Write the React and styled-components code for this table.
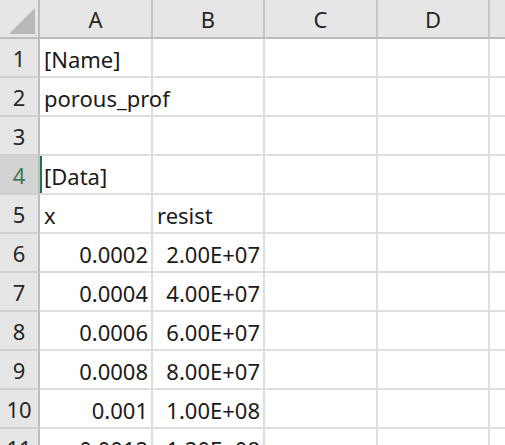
import React from 'react';
import styled, { createGlobalStyle } from "styled-components";

const GlobalStyle = createGlobalStyle`
  html, body {
    margin: 0;
    padding: 0;
    background: #fff;
    overflow: hidden;
  }
`;

const columns = ["A", "B", "C", "D", ""];

// [value, isNumber] pairs for columns A and B
const rows = [
  [["[Name]"], [""]],
  [["porous_prof"], [""]],
  [[""], [""]],
  [["[Data]"], [""]],
  [["x"], ["resist"]],
  [["0.0002", true], ["2.00E+07", true]],
  [["0.0004", true], ["4.00E+07", true]],
  [["0.0006", true], ["6.00E+07", true]],
  [["0.0008", true], ["8.00E+07", true]],
  [["0.001", true], ["1.00E+08", true]],
  [["0.0012", true], ["1.20E+08", true]],
];

const ACTIVE_ROW = 4;

function App() {
  return (
    <>
      <GlobalStyle />
      <Sheet>
        <Corner>
          <svg width="26" height="26" viewBox="0 0 26 26">
            <polygon points="26,0 26,26 0,26" fill="#b9b9b9" />
          </svg>
        </Corner>
        {columns.map((c, i) => (
          <ColHead key={i}>{c}</ColHead>
        ))}
        {rows.map(([a, b], i) => (
          <React.Fragment key={i}>
            <RowHead $active={i + 1 === ACTIVE_ROW}>{i + 1}</RowHead>
            <Cell $num={a[1]} $active={i + 1 === ACTIVE_ROW}>
              <CellText>{a[0]}</CellText>
            </Cell>
            <Cell $num={b[1]}>
              <CellText>{b[0]}</CellText>
            </Cell>
            <Cell />
            <Cell />
            <Cell />
          </React.Fragment>
        ))}
      </Sheet>
    </>
  );
}

const Sheet = styled.div`
  display: grid;
  grid-template-columns: 40px 113px 112px 113px 112px 40px;
  grid-template-rows: 39px;
  grid-auto-rows: 39px;
  width: 505px;
  height: 445px;
  overflow: hidden;
  background: #fff;
  font-family: "Noto Sans", "Noto Sans CJK JP", sans-serif;
  font-size: 22px;
  color: #1a1a1a;
`;

const Corner = styled.div`
  box-sizing: border-box;
  background: #e6e6e6;
  border-right: 2px solid #bdbdbd;
  border-bottom: 2px solid #bdbdbd;
  display: flex;
  align-items: flex-end;
  justify-content: flex-end;
  padding: 0 3px 3px 0;
`;

const ColHead = styled.div`
  box-sizing: border-box;
  background: #e6e6e6;
  border-right: 2px solid #c6c6c6;
  border-bottom: 2px solid #bdbdbd;
  display: flex;
  align-items: center;
  justify-content: center;
  color: #262626;
  padding-top: 1px;
`;

const RowHead = styled.div`
  box-sizing: border-box;
  background: ${(p) => (p.$active ? "#d3d3d3" : "#e6e6e6")};
  color: ${(p) => (p.$active ? "#3b7a57" : "#262626")};
  border-right: 2px solid #bdbdbd;
  border-bottom: 2px solid #d0d0d0;
  display: flex;
  align-items: center;
  justify-content: center;
  padding-top: 1px;
`;

const Cell = styled.div`
  box-sizing: border-box;
  border-right: 2px solid #dedede;
  border-bottom: 2px solid #dedede;
  display: flex;
  align-items: center;
  justify-content: ${(p) => (p.$num ? "flex-end" : "flex-start")};
  padding: 2px 3px 0 4px;
  white-space: nowrap;
  min-width: 0;
  ${(p) => p.$active && `box-shadow: inset 2px 0 0 #217346;`}
`;

const CellText = styled.span`
  position: relative;
  z-index: 1;
`;

export default App
